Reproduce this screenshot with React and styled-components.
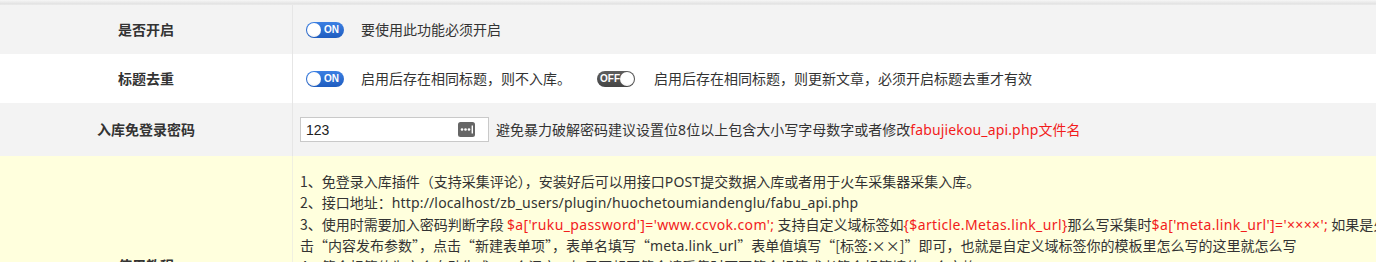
import React from "react";
import styled, { createGlobalStyle } from "styled-components";

const Global = createGlobalStyle`
  html, body { margin: 0; padding: 0; overflow: hidden; background: #fff; }
  body { font-family: "Noto Sans CJK SC", "Noto Sans", sans-serif; font-size: 14px; color: #333; }
`;

const Page = styled.div`
  width: 100%;
  overflow: hidden;
`;

const Shade = styled.div`
  height: 5px;
  background: linear-gradient(#f6f6f6 0%, #e3e3e3 75%, #ebebeb 100%);
`;

const Row = styled.div`
  display: grid;
  grid-template-columns: 293px 1fr;
  background: ${(p) => p.$bg || "#fff"};
`;

const Label = styled.div`
  border-right: 1px solid ${(p) => p.$line || "#e6e6e6"};
  display: flex;
  align-items: center;
  justify-content: center;
  font-weight: bold;
  font-size: 14px;
  color: #333;
  line-height: 21px;
`;

const Cell = styled.div`
  display: flex;
  align-items: center;
  padding: 14px 7px;
  line-height: 21px;
  white-space: nowrap;
  min-width: 0;
`;

const Note = styled.span`
  margin-left: ${(p) => p.$ml || 0}px;
  color: #333;
`;

const Latin = styled.span`
  font-family: "Noto Sans", "Noto Sans CJK SC", sans-serif;
  letter-spacing: ${(p) => p.$ls ?? 0.15}px;
`;

const Red = styled(Latin)`
  color: #f21c1c;
`;

const SwitchBox = styled.span`
  position: relative;
  display: inline-flex;
  align-items: center;
  justify-content: ${(p) => (p.$on ? "flex-end" : "flex-start")};
  box-sizing: border-box;
  width: 38px;
  height: 16px;
  margin-left: ${(p) => p.$ml || 0}px;
  border-radius: 8px;
  padding: ${(p) => (p.$on ? "0 5px 0 0" : "0 0 0 3px")};
  background: ${(p) =>
    p.$on ? "linear-gradient(#3c80e3, #1e5cbf)" : "linear-gradient(#5e5e5e, #454545)"};
  color: #fff;
  font-family: "Liberation Sans", Arial, sans-serif;
  font-weight: bold;
  font-size: 10px;
  line-height: 16px;
  flex-shrink: 0;
`;

const Knob = styled.span`
  position: absolute;
  top: 1px;
  ${(p) => (p.$on ? "left: 1px;" : "right: 1px;")}
  width: 14px;
  height: 14px;
  border-radius: 50%;
  background: radial-gradient(circle at 50% 40%, #ffffff 55%, #e4e4e4 100%);
`;

const Switch = ({ on, ml }) => (
  <SwitchBox $on={on} $ml={ml}>
    <Knob $on={on} />
    {on ? "ON" : "OFF"}
  </SwitchBox>
);

const InputWrap = styled.div`
  position: relative;
  width: 189px;
  height: 25px;
  box-sizing: border-box;
  border: 1px solid #c9c9c9;
  background: #fff;
  flex-shrink: 0;
`;

const Input = styled.input`
  box-sizing: border-box;
  width: 100%;
  height: 100%;
  border: 0;
  outline: none;
  padding: 0 30px 0 5px;
  font-family: "Liberation Sans", Arial, sans-serif;
  font-size: 14px;
  color: #222;
  background: transparent;
`;

const KeyIcon = styled.svg`
  position: absolute;
  right: 13px;
  top: 4px;
`;

const Lines = styled.div`
  padding: 15px 7px;
  line-height: 20.3px;
  white-space: nowrap;
  overflow: hidden;
  color: #333;
`;

const Line = styled.div``;

export default function App() {
  return (
    <Page>
      <Global />
      <Shade />
      <Row $bg="#f3f3f3">
        <Label>是否开启</Label>
        <Cell>
          <Switch on ml={6} />
          <Note $ml={17}>要使用此功能必须开启</Note>
        </Cell>
      </Row>
      <Row>
        <Label>标题去重</Label>
        <Cell>
          <Switch on ml={6} />
          <Note $ml={17}>启用后存在相同标题，则不入库。</Note>
          <Switch ml={26} />
          <Note $ml={19}>启用后存在相同标题，则更新文章，必须开启标题去重才有效</Note>
        </Cell>
      </Row>
      <Row $bg="#f3f3f3">
        <Label>入库免登录密码</Label>
        <Cell>
          <InputWrap>
            <Input defaultValue="123" />
            <KeyIcon width="17" height="15" viewBox="0 0 17 15">
              <rect x="0" y="0" width="17" height="15" rx="2.5" fill="#666" />
              <circle cx="4" cy="7.5" r="1.3" fill="#fff" />
              <circle cx="7.5" cy="7.5" r="1.3" fill="#fff" />
              <circle cx="11" cy="7.5" r="1.3" fill="#fff" />
              <rect x="13.6" y="3.5" width="1.4" height="8" fill="#fff" />
            </KeyIcon>
          </InputWrap>
          <Note $ml={7}>
            避免暴力破解密码建议设置位<Latin>8</Latin>位以上包含大小写字母数字或者修改
            <Red>fabujiekou_api.php</Red>
            <Red $ls={0}>文件名</Red>
          </Note>
        </Cell>
      </Row>
      <Row $bg="#ffffdd">
        <Label $line="#f0f0e0">使用教程</Label>
        <Lines>
          <Line>
            1、免登录入库插件（支持采集评论），安装好后可以用接口<Latin>POST</Latin>提交数据入库或者用于火车采集器采集入库。
          </Line>
          <Line>
            2、接口地址：<Latin>http://localhost/zb_users/plugin/huochetoumiandenglu/fabu_api.php</Latin>
          </Line>
          <Line>
            3、使用时需要加入密码判断字段 <Red $ls={0.38}>$a['ruku_password']='www.ccvok.com';</Red> 支持自定义域标签如
            <Red $ls={0.38}>{"{$article.Metas.link_url}"}</Red>那么写采集时
            <Red $ls={0.38}>$a['meta.link_url']='××××';</Red> 如果是火车头采集器请点
          </Line>
          <Line>
            击“内容发布参数”，点击“新建表单项”，表单名填写“<Latin>meta.link_url</Latin>”表单值填写“[标签:××]”即可，也就是自定义域标签你的模板里怎么写的这里就怎么写
          </Line>
          <Line>4、简介标签值为空会自动生成<Latin>320</Latin>个汉字，如果不想要简介请采集时不要简介标签或者简介标签填值一个空格</Line>
          <Line>5、分类标签值可以填写分类名称或者分类<Latin>ID</Latin>，分类不存在时会自动创建分类</Line>
          <Line>6、标签（<Latin>Tag</Latin>）多个用英文逗号隔开，作者标签填写用户名或者用户<Latin>ID</Latin></Line>
          <Line>7、缩略图标签填写图片地址，留空则自动提取文章中的第一张图片</Line>
          <Line>8、发布成功返回“发布成功”，失败则返回具体错误信息</Line>
        </Lines>
      </Row>
    </Page>
  );
}
